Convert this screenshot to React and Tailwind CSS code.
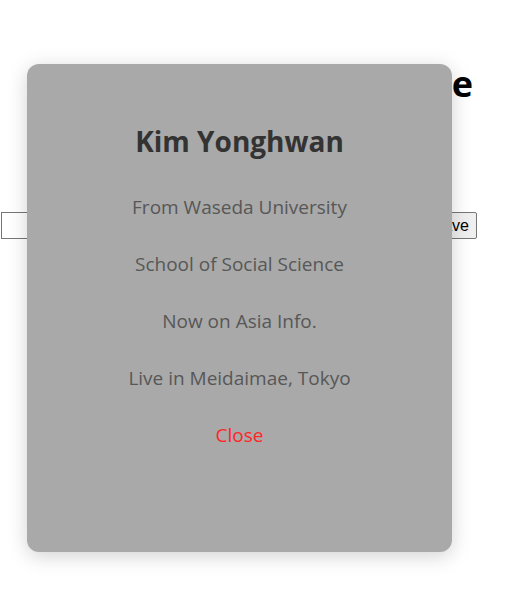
import React from 'react';

const lines = [
  'From Waseda University',
  'School of Social Science',
  'Now on Asia Info.',
  'Live in Meidaimae, Tokyo',
];

const App = () => {
  return (
    <div className="relative min-h-[609px] bg-white" style={{ fontFamily: '"Open Sans", sans-serif' }}>
      {/* page behind the modal */}
      <div className="w-[477px] pt-[62px]">
        <h1 className="flex justify-end pr-[4px] text-[36px] font-bold leading-[44px] text-black">Edit Profile</h1>
        <div className="mt-[106px] flex items-start gap-1 pl-[1px]">
          <input className="h-[27px] flex-1 border border-[#767676] bg-white px-1" />
          <button
            className="h-[27px] rounded-[2px] border border-[#767676] bg-[#efefef] px-[7px] text-[16px] leading-[20px] text-black"
            style={{ fontFamily: '"Liberation Sans", Arial, sans-serif' }}
          >
            Save
          </button>
        </div>
      </div>

      {/* modal */}
      <div className="absolute left-[27px] top-[64px] flex h-[488px] w-[425px] flex-col items-center rounded-xl bg-[#a9a9a9] shadow-[0_4px_20px_rgba(0,0,0,0.18)]">
        <h2 className="mt-[60px] text-[28px] font-bold leading-[34px] text-[#333]">Kim Yonghwan</h2>
        <div className="mt-[21px] flex flex-col items-center">
          {lines.map((t) => (
            <p key={t} className="text-[19px] leading-[57px] text-[#575757]">{t}</p>
          ))}
          <button className="text-[19px] leading-[57px] text-[#ff2626]">Close</button>
        </div>
      </div>
    </div>
  );
};

export default App;
